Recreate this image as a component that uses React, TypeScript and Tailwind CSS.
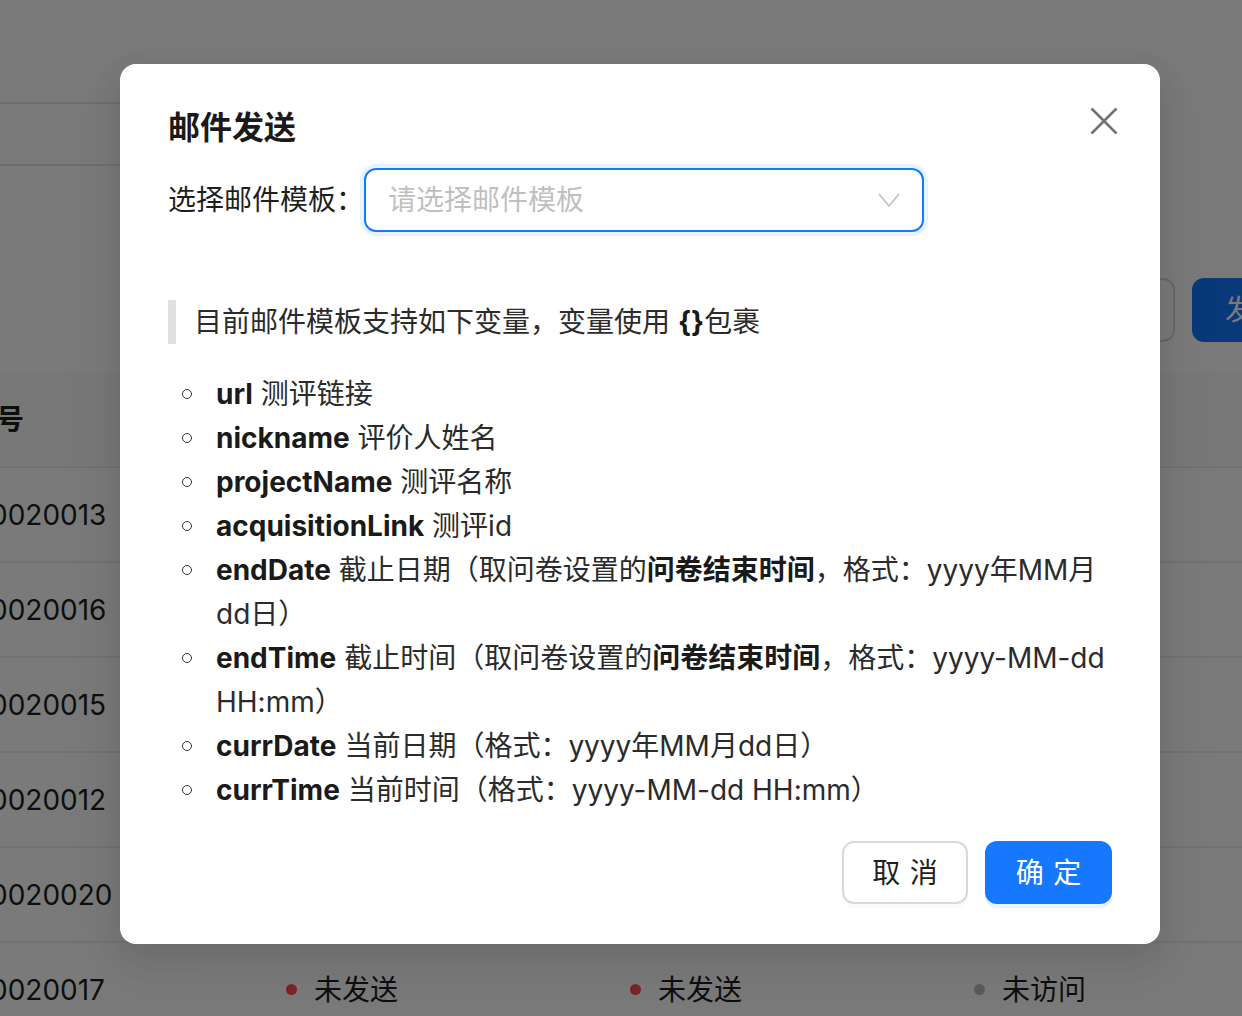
import React from "react";

const rows = ["0020013", "0020016", "0020015", "0020012", "0020020", "0020017"];

function StatusCell({ color, text }: { color: string; text: string }) {
  return (
    <div className="w-[344px] flex items-center gap-[17px] shrink-0">
      <span className={`w-[11px] h-[11px] shrink-0 rounded-full ${color}`} />
      <span>{text}</span>
    </div>
  );
}

function Bullet() {
  return (
    <div className="w-[48px] h-[44px] shrink-0 flex items-center pl-[14px]">
      <span className="w-[10px] h-[10px] rounded-full border-[1.5px] border-[#333]" />
    </div>
  );
}

function Item({ name, children }: { name: string; children: React.ReactNode }) {
  return (
    <li className="flex">
      <Bullet />
      <div className="flex-1 min-w-0">
        <b className="font-bold text-[#1a1a1a]">{name}</b> {children}
      </div>
    </li>
  );
}

export default function App() {
  return (
    <div className="relative w-[1242px] h-[1016px] overflow-hidden bg-white text-[28px] text-[#1f1f1f] [font-family:Inter,'Noto_Sans_CJK_SC',sans-serif]">
      {/* Page behind the mask */}
      <div className="h-[102px]" />
      <div className="w-[600px] h-[64px] border-y-2 border-[#e3e3e3]" />
      <div className="h-[80px]" />
      {/* toolbar */}
      <div className="h-[128px] pt-[32px] flex justify-end gap-[17px] mr-[-70px]">
        <div className="w-[200px] h-[64px] rounded-[12px] border-2 border-[#d9d9d9] bg-white" />
        <div className="w-[120px] h-[64px] rounded-[12px] bg-[#1677ff] text-white flex items-center pl-[33px]">发送</div>
      </div>
      {/* table header */}
      <div className="h-[94px] bg-[#fafafa] border-b-2 border-[#eeeeee] flex items-center">
        <span className="font-bold -ml-[4px]">号</span>
      </div>
      {rows.map((r) => (
        <div key={r} className="h-[95px] border-b-2 border-[#eeeeee] flex items-center">
          <div className="w-[286px] shrink-0">
            <span className="-ml-[10px] block">{r}</span>
          </div>
          <StatusCell color="bg-[#ff4d4f]" text="未发送" />
          <StatusCell color="bg-[#ff4d4f]" text="未发送" />
          <StatusCell color="bg-[#bfbfbf]" text="未访问" />
        </div>
      ))}

      {/* Mask */}
      <div className="absolute inset-0 bg-black/[0.52]" />

      {/* Modal */}
      <div className="absolute left-[120px] top-[64px] w-[1040px] rounded-[16px] bg-white px-[48px] pt-[40px] pb-[40px] shadow-[0_12px_32px_0_rgba(0,0,0,0.08),0_18px_56px_16px_rgba(0,0,0,0.05)]">
        <button className="absolute left-[970px] top-[43px] w-[28px] h-[28px] text-[#737373]">
          <svg width="28" height="28" viewBox="0 0 28 28" fill="none" stroke="currentColor" strokeWidth="2.6">
            <path d="M1.5 1.5 L26.5 26.5 M26.5 1.5 L1.5 26.5" />
          </svg>
        </button>

        <h2 className="text-[32px] leading-[48px] font-bold text-[#1a1a1a]">邮件发送</h2>

        <div className="mt-[16px] flex items-center h-[64px]">
          <label className="shrink-0">选择邮件模板：</label>
          <div className="w-[560px] h-[64px] rounded-[12px] border-2 border-[#1677ff] ring-4 ring-[rgba(5,145,255,0.1)] flex items-center justify-between pl-[22px] pr-[22px]">
            <span className="text-[#bfbfbf]">请选择邮件模板</span>
            <svg width="22" height="14" viewBox="0 0 22 14" fill="none" stroke="#bfbfbf" strokeWidth="1.6">
              <path d="M1 1 L11 13 L21 1" />
            </svg>
          </div>
        </div>

        <div className="mt-[68px] flex h-[44px] leading-[44px]">
          <div className="w-[8px] bg-[#e0e0e0] shrink-0" />
          <p className="pl-[18px] text-[#2b2b2b]">
            目前邮件模板支持如下变量，变量使用 <b className="font-bold text-[#1a1a1a]">{"{}"}</b>包裹
          </p>
        </div>

        <ul className="mt-[28px] leading-[44px] text-[#2b2b2b]">
          <Item name="url">测评链接</Item>
          <Item name="nickname">评价人姓名</Item>
          <Item name="projectName">测评名称</Item>
          <Item name="acquisitionLink">测评id</Item>
          <Item name="endDate">
            截止日期（取问卷设置的<b className="font-bold text-[#1a1a1a]">问卷结束时间</b>，格式：yyyy年MM月dd日）
          </Item>
          <Item name="endTime">
            截止时间（取问卷设置的<b className="font-bold text-[#1a1a1a]">问卷结束时间</b>，格式：yyyy-MM-dd HH:mm）
          </Item>
          <Item name="currDate">当前日期（格式：yyyy年MM月dd日）</Item>
          <Item name="currTime">当前时间（格式：yyyy-MM-dd HH:mm）</Item>
        </ul>

        <div className="mt-[29px] flex justify-end gap-[17px]">
          <button className="w-[126px] h-[63px] rounded-[12px] border-2 border-[#d9d9d9] bg-white text-[#1f1f1f] shadow-[0_4px_0_rgba(0,0,0,0.02)] flex items-center justify-center">
            <span className="tracking-[0.34em] mr-[-0.34em]">取消</span>
          </button>
          <button className="w-[127px] h-[63px] rounded-[12px] bg-[#1677ff] text-white shadow-[0_4px_0_rgba(5,145,255,0.1)] flex items-center justify-center">
            <span className="tracking-[0.34em] mr-[-0.34em]">确定</span>
          </button>
        </div>
      </div>
    </div>
  );
}
